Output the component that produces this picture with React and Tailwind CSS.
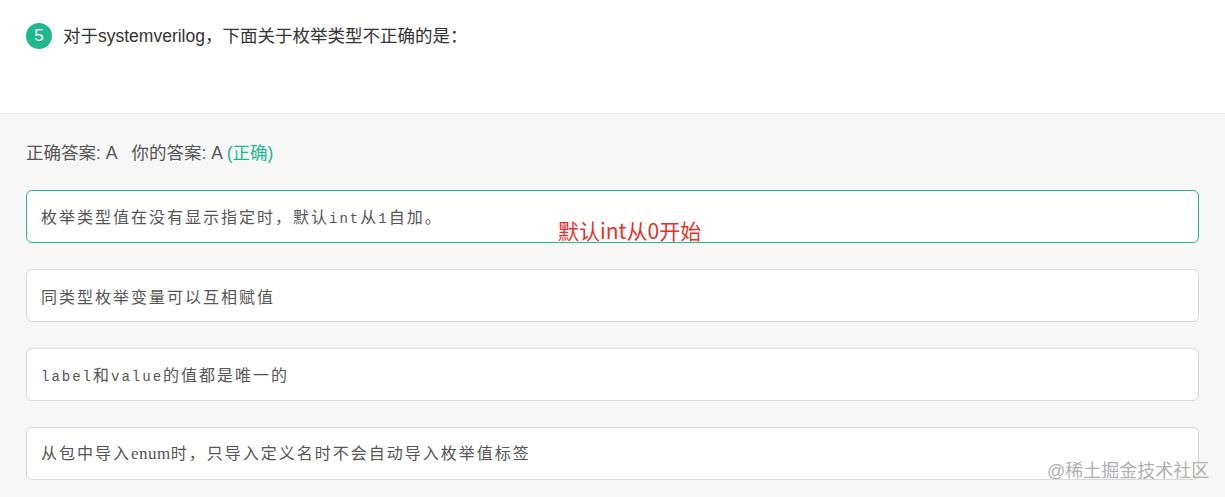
const options = [
  { parts: ["枚举类型值在没有显示指定时，默认", ["int"], "从", ["1"], "自加。"], correct: true },
  { parts: ["同类型枚举变量可以互相赋值"] },
  { parts: [["label"], "和", ["value"], "的值都是唯一的"] },
  { parts: ["从包中导入", ["enum", "serif"], "时，只导入定义名时不会自动导入枚举值标签"] }
];

const Part = ({ part }) => {
  if (typeof part === "string") return <span>{part}</span>;
  const [text, kind] = part;
  return (
    <span
      className={
        kind === "serif"
          ? "font-['Liberation_Serif',serif] text-[17px] tracking-[0.5px]"
          : "font-['Liberation_Mono',monospace] text-[14px]"
      }
    >
      {text}
    </span>
  );
};

const App = () => {
  return (
    <div className="relative h-[497px] w-[1225px] overflow-hidden bg-[#f7f7f7] font-['Liberation_Sans','Noto_Sans_CJK_SC',sans-serif]">
      <section className="h-[114px] border-b border-[#ececec] bg-white px-[26px] pt-[23px]">
        <div className="flex items-center gap-[11px]">
          <span className="flex h-[26px] w-[26px] items-center justify-center rounded-full bg-[#20b78f] text-[17px] text-white">
            5
          </span>
          <h1 className="text-[17.5px] text-[#333]">对于systemverilog，下面关于枚举类型不正确的是：</h1>
        </div>
      </section>

      <section className="px-[26px] pt-[26px]">
        <p className="text-[17.5px] leading-[26px] text-[#555]">
          正确答案: A<span className="ml-[14px]">你的答案: A</span>{" "}
          <span className="text-[#20b78f]">(正确)</span>
        </p>

        <div className="mt-[24px] flex w-[1173px] flex-col gap-[26px]">
          {options.map((opt, i) => (
            <div
              key={i}
              className={`relative flex h-[53px] items-center rounded-[6px] border bg-white px-[14px] font-['Noto_Sans_CJK_SC',sans-serif] text-[16px] tracking-[2px] text-[#555] ${
                opt.correct ? "border-[#2bb594]" : "border-[#d9d9d9]"
              }`}
            >
              <span>
                {opt.parts.map((p, j) => (
                  <Part key={j} part={p} />
                ))}
              </span>
              {opt.correct && (
                <span className="absolute left-[531px] top-[25px] text-[21px] leading-[28px] tracking-normal text-[#e8302a]">
                  默认int从0开始
                </span>
              )}
            </div>
          ))}
        </div>
      </section>

      <span className="absolute left-[1047px] top-[458px] text-[18px] text-[#b0b0b0]">@稀土掘金技术社区</span>
    </div>
  );
};

export default App;
